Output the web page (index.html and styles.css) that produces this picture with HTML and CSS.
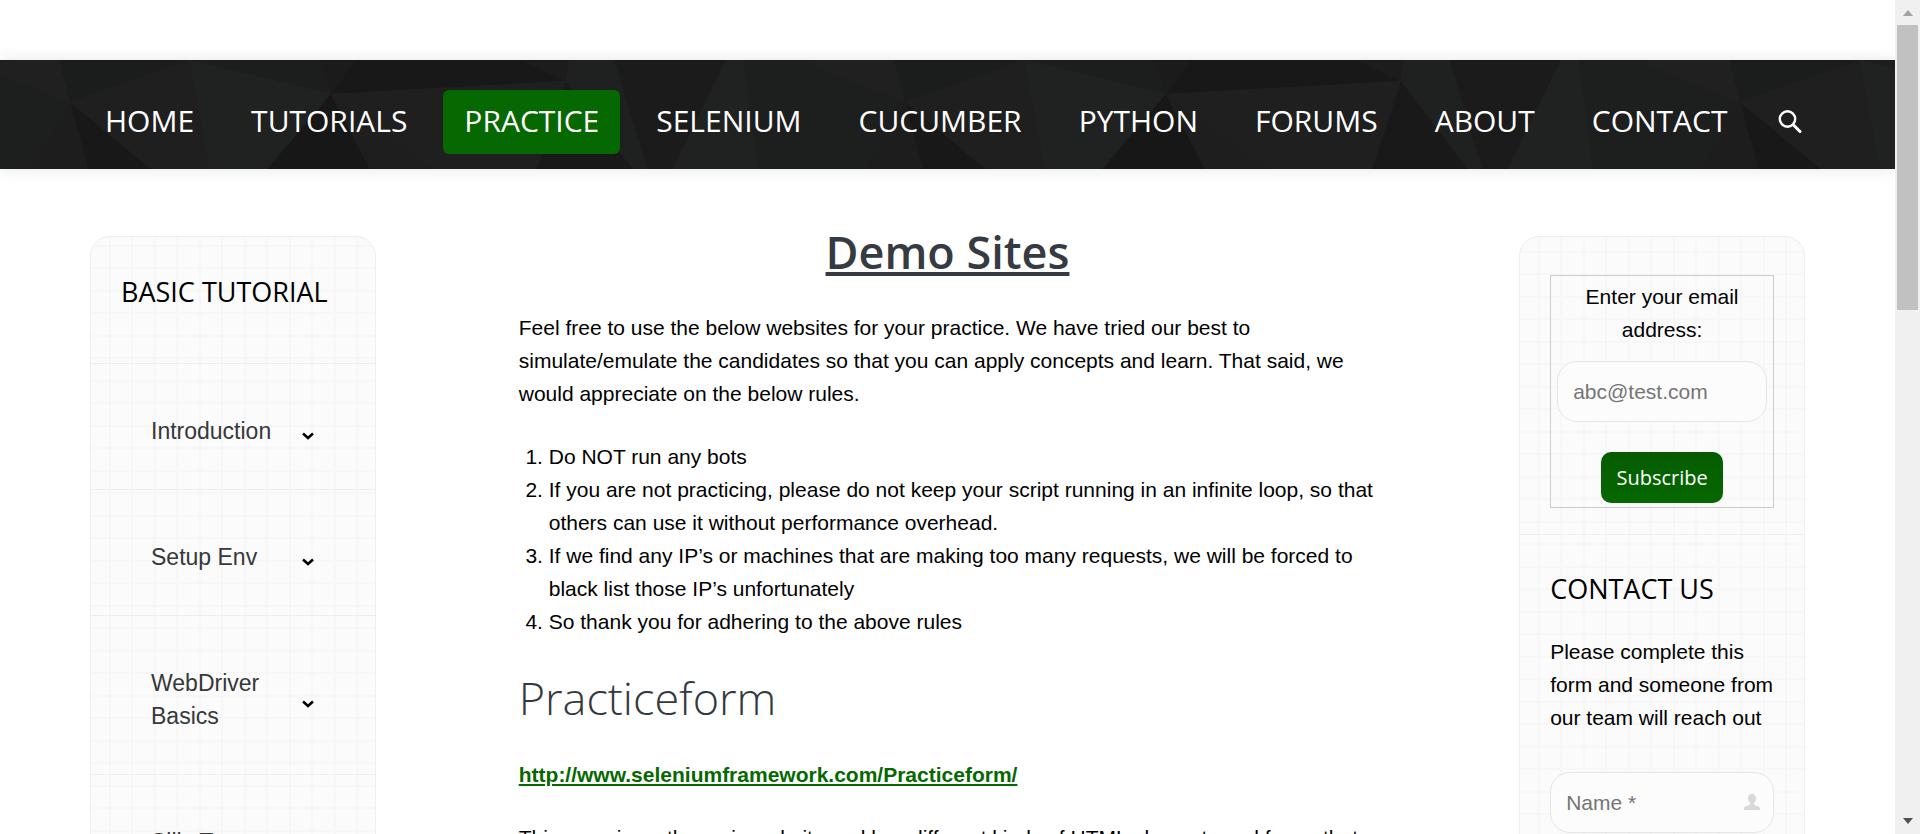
FILE: index.html
```
<!DOCTYPE html>
<html lang="en">
<head>
<meta charset="utf-8">
<title>Demo Sites</title>
<link rel="stylesheet" href="styles.css">
</head>
<body>
<div class="page">
  <header class="site-header">
    <svg class="header-art" width="100%" height="100%" aria-hidden="true">
      <defs>
        <pattern id="facets" width="835" height="109" patternUnits="userSpaceOnUse">
          <rect width="835" height="109" fill="#1c1c1c"/>
          <path fill="#1d1e1e" d="M0 0L0 16L70 42L30 109H0ZM743 0H803L835 14V109H758Z"/>
          <path fill="#202020" d="M0 0H59L70 42L0 15ZM803 0H835V15Z"/>
          <path fill="#1b1c1c" d="M59 0H190L70 42Z"/>
          <path fill="#1d1d1d" d="M70 42L30 109H88Z"/>
          <path fill="#181818" d="M70 42L88 109H151Z"/>
          <path fill="#1f1f1f" d="M70 42L190 0L210 109H151Z"/>
          <path fill="#202121" d="M190 0L331 34L267 109H210Z"/>
          <path fill="#1c1d1d" d="M190 0H318L331 34Z"/>
          <path fill="#1b1b1b" d="M318 0H355L331 34Z"/>
          <path fill="#181818" d="M355 0H522L566 21L331 34Z"/>
          <path fill="#1c1c1c" d="M522 0H569L566 21Z"/>
          <path fill="#171717" d="M331 34L267 109H370Z"/>
          <path fill="#1e1e1e" d="M331 34L370 109H435Z"/>
          <path fill="#1f1f1f" d="M331 34L566 21L537 109H435Z"/>
          <path fill="#191919" d="M566 21L537 109H633Z"/>
          <path fill="#1f2121" d="M569 0H614L647 109H633L566 21Z"/>
          <path fill="#1b1b1b" d="M614 0H726L673 109H647Z"/>
          <path fill="#202121" d="M726 0H743L758 109H673Z"/>
        </pattern>
      </defs>
      <rect width="100%" height="100%" fill="url(#facets)"/>
    </svg>
    <nav class="main-nav">
      <a class="nav-link" href="#">HOME</a>
      <a class="nav-link" href="#">TUTORIALS</a>
      <a class="nav-link active" href="#">PRACTICE</a>
      <a class="nav-link" href="#">SELENIUM</a>
      <a class="nav-link" href="#">CUCUMBER</a>
      <a class="nav-link" href="#">PYTHON</a>
      <a class="nav-link" href="#">FORUMS</a>
      <a class="nav-link" href="#">ABOUT</a>
      <a class="nav-link" href="#">CONTACT</a>
      <button class="search" aria-label="Search">
        <svg width="24" height="24" viewBox="0 0 24 24" fill="none" stroke="#fff" stroke-linecap="round"><circle cx="9.500" cy="9" r="7.700" stroke-width="2.400"/><path stroke-width="3" d="M15.500 15L22 21.500"/></svg>
      </button>
    </nav>
  </header>

  <div class="columns">
    <aside class="card">
      <h2 class="card-title">BASIC TUTORIAL</h2>
      <ul class="menu">
        <li class="menu-item"><a href="#">Introduction</a><button class="toggle" aria-label="Expand Introduction"><svg width="12" height="8" viewBox="0 0 12 8"><path d="M1 1.500L6 6L11 1.500"/></svg></button></li>
        <li class="menu-item"><a href="#">Setup Env</a><button class="toggle" aria-label="Expand Setup Env"><svg width="12" height="8" viewBox="0 0 12 8"><path d="M1 1.500L6 6L11 1.500"/></svg></button></li>
        <li class="menu-item"><a href="#">WebDriver Basics</a><button class="toggle" aria-label="Expand WebDriver Basics"><svg width="12" height="8" viewBox="0 0 12 8"><path d="M1 1.500L6 6L11 1.500"/></svg></button></li>
        <li class="menu-item"><a href="#">Silly Test</a><button class="toggle" aria-label="Expand Silly Test"><svg width="12" height="8" viewBox="0 0 12 8"><path d="M1 1.500L6 6L11 1.500"/></svg></button></li>
      </ul>
    </aside>

    <main class="content">
      <h1 class="title">Demo Sites</h1>
      <p>Feel free to use the below websites for your practice. We have tried our best to simulate/emulate the candidates so that you can apply concepts and learn. That said, we would appreciate on the below rules.</p>
      <ol class="rules">
        <li>Do NOT run any bots</li>
        <li>If you are not practicing, please do not keep your script running in an infinite loop, so that others can use it without performance overhead.</li>
        <li>If we find any IP’s or machines that are making too many requests, we will be forced to black list those IP’s unfortunately</li>
        <li>So thank you for adhering to the above rules</li>
      </ol>
      <h2 class="subtitle">Practiceform</h2>
      <p><a class="demo-link" href="#">http://www.seleniumframework.com/Practiceform/</a></p>
      <p>This page is on the main website and has different kinds of HTML elements and forms that</p>
    </main>

    <aside class="card card-right">
      <section class="widget">
        <form class="subscribe">
          <label for="email">Enter your email address:</label>
          <input class="field" id="email" type="email" placeholder="abc@test.com">
          <button class="submit" type="button">Subscribe</button>
        </form>
      </section>
      <section class="widget contact">
        <h2 class="widget-title">CONTACT US</h2>
        <p>Please complete this form and someone from our team will reach out</p>
        <div class="name-row">
          <input class="field" type="text" placeholder="Name *" aria-label="Name">
          <svg class="user" width="16" height="16" viewBox="0 0 16 16" aria-hidden="true"><path d="M8 0C5.400 0 3.900 1.800 4 4.500C4.100 6.600 5 8.200 6 9.200V10.800C4.500 11.800 0 12 0 15V16H16V15C16 12 11.500 11.800 10 10.800V9.200C11 8.200 11.900 6.600 12 4.500C12.100 1.800 10.600 0 8 0Z"/></svg>
        </div>
      </section>
    </aside>
  </div>
</div>
<div class="scrollbar" aria-hidden="true">
  <svg width="10" height="6" viewBox="0 0 10 6"><path fill="#a3a3a3" d="M0 6L5 0L10 6Z"/></svg>
  <div class="track"><div class="thumb"></div></div>
  <svg width="10" height="6" viewBox="0 0 10 6"><path fill="#505050" d="M0 0L5 6L10 0Z"/></svg>
</div>
</body>
</html>
```
FILE: styles.css
```
* { box-sizing: border-box; }
body {
  margin: 0;
  display: flex;
  height: 100vh;
  overflow: hidden;
  background: #fff;
  color: #000;
  font: 21px/33px "Liberation Sans", Arial, sans-serif;
}
h1, h2, .nav-link, .submit { font-family: "Open Sans", sans-serif; }
p { margin: 0 0 30px; }
button { border: 0; padding: 0; background: none; }

.page { flex: 1; min-width: 0; padding-top: 60px; overflow: hidden; }

.site-header { position: relative; box-shadow: 0 0 15px rgba(0, 0, 0, 0.1); }
.header-art { position: absolute; inset: 0; }
.main-nav {
  position: relative;
  display: flex;
  align-items: center;
  gap: 15px;
  padding: 30px 90px 15px 84px;
}
.nav-link {
  padding: 0 21px 2px;
  border-radius: 6px;
  color: #fff;
  font-size: 30px;
  line-height: 62px;
  text-decoration: none;
}
.nav-link.active { background: #066800; }
.search { display: flex; margin-left: 15px; }

.columns {
  display: grid;
  grid-template-columns: 2fr 6fr 2fr;
  column-gap: calc(100% / 12);
  padding: 67px 90px 0;
}

.card {
  border: 1px solid #eee;
  border-radius: 20px;
  height: 800px;
  background-color: #fbfbfb;
  background-image:
    linear-gradient(90deg, #f7f7f7 2px, transparent 2px, transparent 22px, #f7f7f7 22px, #f7f7f7 24px, transparent 24px),
    linear-gradient(#f7f7f7 2px, transparent 2px, transparent 22px, #f7f7f7 22px, #f7f7f7 24px, transparent 24px);
  background-size: 45px 45px;
  background-position: 18px 8px;
}
.card-right { background-position: 18px 14px; }

.card-title, .widget-title { margin: 0; font-size: 27px; font-weight: 400; line-height: 36px; }
.card-title { padding: 37px 30px 53px; }
.menu { list-style: none; margin: 0; padding: 0; }
.menu-item {
  display: flex;
  align-items: center;
  justify-content: space-between;
  gap: 12px;
  padding: 51px 61px 41px 60px;
  border-top: 1px solid #eee;
  font-size: 23px;
}
.menu-item a { color: #363839; text-decoration: none; }
.toggle { display: flex; padding-top: 8px; }
.toggle path { fill: none; stroke: #000; stroke-width: 2.500; }

.title {
  margin: 0 0 43px;
  color: #363a42;
  font-size: 45px;
  font-weight: 600;
  line-height: 32px;
  text-align: center;
  text-decoration: underline;
}
.rules { margin: 0 0 29px; padding-left: 30px; }
.subtitle { margin: 0 0 29px; color: #333940; font-size: 45px; font-weight: 300; line-height: 62px; }
.demo-link { color: #066800; font-weight: bold; }

.widget { padding: 38px 30px 26px; }
.subscribe {
  display: flex;
  flex-direction: column;
  align-items: center;
  padding: 4px 6px;
  border: 1px solid #ccc;
  text-align: center;
}
.field {
  width: 100%;
  height: 61px;
  padding: 1px 15px 0;
  border: 1px solid #e5e5e5;
  border-radius: 20px;
  background: #fcfcfc;
  font: inherit;
}
.field::placeholder { color: #757575; }
.subscribe .field { margin: 15px 0 30px; }
.submit {
  padding: 0 15px;
  border-radius: 10px;
  background: linear-gradient(#055c00, #066800);
  color: #fff;
  font-size: 20px;
  line-height: 51px;
}
.contact { padding-top: 36px; border-top: 1px solid #eee; }
.widget-title { margin-bottom: 28px; }
.contact p { margin-bottom: 38px; }
.name-row { position: relative; }
.user { position: absolute; right: 14px; top: 22px; fill: #d9d9d9; }

.scrollbar {
  display: flex;
  flex-direction: column;
  align-items: center;
  width: 25px;
  padding: 10px 0;
  background: #f0f0f0;
}
.track { flex: 1; padding: 9px 0; }
.thumb { width: 21px; height: 285px; background: #c1c1c1; }
```
